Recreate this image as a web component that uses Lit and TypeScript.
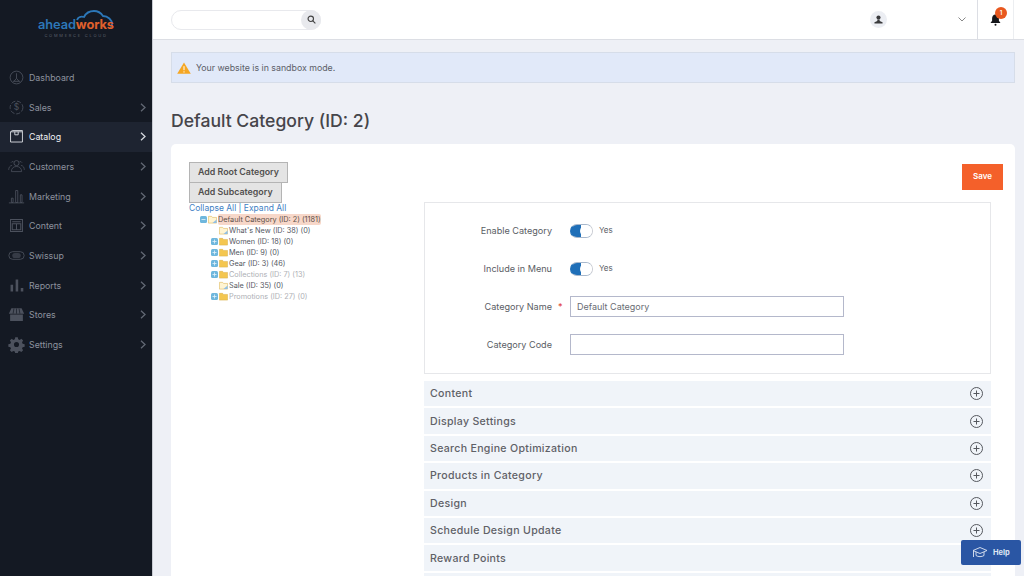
import { LitElement, html, css, svg } from "lit";
import { customElement } from "lit/decorators.js";

const icons: Record<string, unknown> = {
  dashboard: svg`<circle cx="10" cy="10" r="7.5" fill="none" stroke="currentColor"/><path d="M10 5v6M6 14.5h8M10 11l-3 3.5M10 11l3 3.5" fill="none" stroke="currentColor"/>`,
  sales: svg`<circle cx="10" cy="10" r="7.5" fill="none" stroke="currentColor" stroke-dasharray="5 2"/><text x="10" y="13.5" font-size="10" text-anchor="middle" fill="currentColor" font-family="Inter, sans-serif">$</text>`,
  catalog: svg`<path d="M3 4.5h14v12H3zM3 4.5l2-1.5h12v1.5M8 4.5v3.5h4V4.5" fill="none" stroke="currentColor" stroke-width="1.1"/>`,
  customers: svg`<circle cx="10" cy="6" r="3" fill="none" stroke="currentColor"/><path d="M4 16c0-4 2.5-6 6-6s6 2 6 6zM3.5 5.5a2.2 2.2 0 0 1 3-1M16.5 5.5a2.2 2.2 0 0 0-3-1M.8 14c0-3 1.5-5 4-5.3M19.2 14c0-3-1.5-5-4-5.3" fill="none" stroke="currentColor" stroke-width=".9"/>`,
  marketing: svg`<path d="M1 17.5h18M4 17v-5h2v5zM9 17V3h2.5v14zM14.5 17V8h2v9z" fill="none" stroke="currentColor"/>`,
  content: svg`<path d="M3 3h14v14H3zM5 5.5h10M5 8h10v7H5zM10 8v7" fill="none" stroke="currentColor" stroke-width="1.2"/>`,
  swissup: svg`<rect x="1" y="5.5" width="18" height="9" rx="4.5" fill="none" stroke="currentColor"/><rect x="5" y="7" width="10" height="6" rx="3" fill="currentColor" opacity=".6"/>`,
  reports: svg`<path d="M3 9h3v8H3zM9 3h3v14H9zM15 13h3v4h-3z" fill="currentColor"/>`,
  stores: svg`<path d="M4 2.5h12l3 6.5H1zM2.5 10h15v7.5h-15z" fill="currentColor"/><path d="M7 3l-1 6M10 3v6M13 3l1 6" stroke="#141923" stroke-width=".8"/>`,
  settings: svg`<path d="M8.5 1.5h3l.5 2.4 1.7.7 2-1.3 2.1 2.1-1.3 2 .7 1.7 2.4.5v3l-2.4.5-.7 1.7 1.3 2-2.1 2.1-2-1.3-1.7.7-.5 2.4h-3l-.5-2.4-1.7-.7-2 1.3-2.1-2.1 1.3-2-.7-1.7-2.4-.5v-3l2.4-.5.7-1.7-1.3-2 2.1-2.1 2 1.3 1.7-.7zM10 7a3 3 0 1 0 0 6 3 3 0 0 0 0-6z" fill="currentColor" fill-rule="evenodd"/>`,
};

const nav = [
  { id: "dashboard", label: "Dashboard", arrow: false },
  { id: "sales", label: "Sales", arrow: true },
  { id: "catalog", label: "Catalog", arrow: true, active: true },
  { id: "customers", label: "Customers", arrow: true },
  { id: "marketing", label: "Marketing", arrow: true },
  { id: "content", label: "Content", arrow: true },
  { id: "swissup", label: "Swissup", arrow: true },
  { id: "reports", label: "Reports", arrow: true },
  { id: "stores", label: "Stores", arrow: true },
  { id: "settings", label: "Settings", arrow: true },
];

const tree = [
  { label: "What's New (ID: 38) (0)", leaf: true },
  { label: "Women (ID: 18) (0)" },
  { label: "Men (ID: 9) (0)" },
  { label: "Gear (ID: 3) (46)" },
  { label: "Collections (ID: 7) (13)", dim: true },
  { label: "Sale (ID: 35) (0)", leaf: true },
  { label: "Promotions (ID: 27) (0)", dim: true },
];

const sections = [
  "Content",
  "Display Settings",
  "Search Engine Optimization",
  "Products in Category",
  "Design",
  "Schedule Design Update",
  "Reward Points",
];

@customElement("app-root")
export class AppRoot extends LitElement {
  static styles = css`
    :host {
      display: flex;
      width: 1024px;
      height: 576px;
      overflow: hidden;
      position: relative;
      background: #eef0f6;
      font-family: Inter, "Liberation Sans", sans-serif;
      color: #41444c;
    }
    .side {
      width: 152px;
      flex: none;
      background: #141923;
      border-right: 1px solid #c9ccd3;
    }
    .logo {
      height: 62.6px;
      box-sizing: border-box;
      padding-top: 7px;
      display: flex;
      flex-direction: column;
      align-items: center;
      position: relative;
    }
    .cloud {
      position: absolute;
      left: 66px;
      top: 9px;
    }
    .brand {
      margin-top: 11px;
      font-size: 12.8px;
      line-height: 14px;
      font-weight: 600;
      color: #2c77b8;
      position: relative;
      letter-spacing: -0.1px;
    }
    .brand b {
      color: #e0602c;
      font-weight: 700;
    }
    .tag {
      font-size: 4px;
      line-height: 6px;
      letter-spacing: 1.75px;
      color: #5b606b;
      margin-top: 1px;
    }
    .item {
      height: 29.7px;
      display: flex;
      align-items: center;
      color: #8d929e;
      font-size: 8.8px;
    }
    .item.active {
      background: #1e2431;
      color: #f0f1f4;
    }
    .item .ic {
      width: 17px;
      height: 17px;
      margin-left: 8px;
      margin-right: 4px;
      color: #4c515d;
      flex: none;
    }
    .item.active .ic {
      color: #d5d8de;
    }
    .item span {
      flex: 1;
    }
    .chev {
      width: 6px;
      height: 9px;
      margin-right: 6px;
      fill: none;
      stroke: #626874;
      stroke-width: 1.3;
      flex: none;
    }
    .item.active .chev {
      stroke: #d5d8de;
    }
    .main {
      flex: 1;
      min-width: 0;
      display: flex;
      flex-direction: column;
    }
    .top {
      height: 39px;
      flex: none;
      background: #fff;
      border-bottom: 1px solid #dcdee4;
      display: flex;
      align-items: center;
      padding-left: 18px;
    }
    .search {
      width: 150px;
      height: 20px;
      box-sizing: border-box;
      border: 1px solid #e8e9ed;
      border-radius: 10px;
      display: flex;
      justify-content: flex-end;
    }
    .search i {
      width: 20px;
      height: 20px;
      margin: -1px;
      border-radius: 50%;
      background: #e8e9ed;
      display: flex;
      align-items: center;
      justify-content: center;
    }
    .user {
      margin-left: auto;
      width: 17px;
      height: 17px;
      border-radius: 50%;
      background: #eceef3;
      display: flex;
      align-items: center;
      justify-content: center;
    }
    .caret {
      width: 8px;
      height: 5px;
      margin-left: 71px;
      margin-right: 11px;
      fill: none;
      stroke: #888;
    }
    .bell {
      width: 37px;
      height: 39px;
      box-sizing: border-box;
      border-left: 1px solid #dcdee4;
      border-right: 1px solid #eceef1;
      margin-right: 10px;
      position: relative;
      display: flex;
      align-items: center;
      justify-content: center;
    }
    .badge {
      position: absolute;
      left: 17px;
      top: 7px;
      width: 12px;
      height: 12px;
      border-radius: 50%;
      background: #e8581f;
      color: #fff;
      font-size: 6px;
      font-weight: 600;
      line-height: 12px;
      text-align: center;
    }
    .content {
      padding: 12px 9px 0 18px;
      flex: 1;
      min-height: 0;
      display: flex;
      flex-direction: column;
    }
    .msg {
      height: 31px;
      flex: none;
      box-sizing: border-box;
      background: #e1e9f9;
      border: 1px solid #d6dde9;
      display: flex;
      align-items: center;
      gap: 5px;
      padding-left: 5px;
      font-size: 8.8px;
      color: #5c6068;
    }
    h1 {
      margin: 25px 0 10px;
      font-size: 17.6px;
      line-height: 26px;
      font-weight: 500;
      color: #46454a;
      flex: none;
    }
    .card {
      flex: 1;
      min-height: 0;
      background: #fff;
      border-radius: 5px 5px 0 0;
      padding: 18px 12px 0 18px;
      display: flex;
      overflow: hidden;
    }
    .left {
      width: 235px;
      flex: none;
    }
    .btns {
      display: flex;
      flex-direction: column;
      align-items: flex-start;
    }
    .btn {
      height: 21px;
      box-sizing: border-box;
      padding: 0 8px;
      background: #e4e4e4;
      border: 1px solid #b4b4b4;
      color: #52504f;
      font: 600 8.85px/18px Inter, sans-serif;
    }
    .btn + .btn {
      margin-top: -1px;
    }
    .links {
      font-size: 8.5px;
      line-height: 11px;
      color: #3f7fc4;
    }
    .tree {
      padding-left: 11px;
      font-size: 7.3px;
      color: #55585f;
    }
    .node {
      height: 11px;
      display: flex;
      align-items: center;
      gap: 1px;
      white-space: nowrap;
    }
    .node.root .txt {
      background: #f7d7c9;
      color: #5d4f48;
      padding: 1px 0;
      border-radius: 2px;
      line-height: 9px;
    }
    .node.child {
      padding-left: 11px;
    }
    .node.dim {
      color: #aeb0b5;
    }
    .plus {
      width: 7px;
      height: 7px;
      flex: none;
    }
    .folder {
      width: 9px;
      height: 9px;
      flex: none;
    }
    .right {
      flex: 1;
      min-width: 0;
      display: flex;
      flex-direction: column;
    }
    .save {
      align-self: flex-end;
      flex: none;
      width: 41px;
      height: 26px;
      margin-top: 2px;
      background: #f4602a;
      color: #fff;
      font-size: 8px;
      font-weight: 600;
      line-height: 25px;
      text-align: center;
    }
    .form {
      width: 567px;
      height: 172px;
      flex: none;
      box-sizing: border-box;
      margin-top: 12px;
      border: 1px solid #e6e7ea;
      padding-top: 12.5px;
      display: flex;
      flex-direction: column;
      gap: 8px;
    }
    .row {
      height: 30px;
      flex: none;
      display: flex;
      align-items: center;
      font-size: 9.1px;
      color: #5a5d64;
    }
    .row label {
      width: 127px;
      text-align: right;
      flex: none;
    }
    .req {
      width: 18px;
      flex: none;
      color: #e0312a;
      padding-left: 6px;
      box-sizing: border-box;
    }
    .sw {
      width: 23px;
      height: 14px;
      box-sizing: border-box;
      border-radius: 7px;
      background: linear-gradient(90deg, #1f6fb8 50%, #fff 50%);
      border: 1px solid #1f6fb8;
      border-right-color: #c8cbd2;
      border-top-color: #a8b8cc;
      border-bottom-color: #a8b8cc;
      display: flex;
      justify-content: flex-end;
      margin-right: 6px;
    }
    .sw i {
      width: 12px;
      height: 12px;
      border-radius: 50%;
      background: #fff;
    }
    .yes {
      font-size: 8px;
      margin-top: -2px;
    }
    .field {
      width: 274px;
      height: 21px;
      box-sizing: border-box;
      border: 1px solid #b4b8cb;
      padding-left: 6px;
      font-size: 9px;
      line-height: 19px;
      color: #6a6d74;
    }
    .acc {
      width: 567px;
      flex: none;
      margin-top: 7px;
      display: flex;
      flex-direction: column;
      gap: 2px;
    }
    .sec {
      height: 25.4px;
      flex: none;
      background: #f0f4f9;
      display: flex;
      align-items: center;
      justify-content: space-between;
      padding: 0 8px 0 6px;
      font-size: 10.6px;
      font-weight: 500;
      letter-spacing: 0.3px;
      color: #5f6167;
    }
    .sec svg {
      width: 13px;
      height: 13px;
      fill: none;
      stroke: #55585e;
    }
    .help {
      position: absolute;
      left: 961px;
      top: 540px;
      width: 60px;
      height: 25px;
      border-radius: 2px;
      background: #2a56a4;
      color: #dfe6f3;
      font-size: 7.5px;
      font-weight: 700;
      display: flex;
      align-items: center;
      gap: 5px;
      padding-left: 11px;
      box-sizing: border-box;
    }
  `;

  render() {
    return html`
      <aside class="side">
        <div class="logo">
          <svg class="cloud" width="52" height="22" viewBox="0 0 52 22" fill="none">
            <path d="M11 11c1-3 4-4 7-3 2-4 6-6 10-6 4 0 7 2 9 5 5 0 9 4 9 8 0 2-.5 3-1.500 4" stroke="#2c77b8" stroke-width="1.8"/>
          </svg>
          <div class="brand">ahead<b>works</b></div>
          <div class="tag">COMMERCE CLOUD</div>
        </div>
        ${nav.map(
          (n) => html`
            <div class="item ${n.active ? "active" : ""}">
              <svg class="ic" viewBox="0 0 20 20">${icons[n.id]}</svg>
              <span>${n.label}</span>
              ${n.arrow ? html`<svg class="chev" viewBox="0 0 6 9"><path d="M1 .8 5 4.5 1 8.2" /></svg>` : ""}
            </div>
          `
        )}
      </aside>
      <div class="main">
        <header class="top">
          <div class="search">
            <i>
              <svg width="9" height="9" viewBox="0 0 10 10" fill="none" stroke="#444" stroke-width="1.3">
                <circle cx="4.2" cy="4.2" r="3" /><path d="M6.5 6.5 9.3 9.3" />
              </svg>
            </i>
          </div>
          <div class="user">
            <svg width="9" height="9" viewBox="0 0 10 10" fill="#3a3a3c">
              <circle cx="5" cy="2.8" r="2.3" /><path d="M3.7 5h2.6v1.6L9.5 8v1.5H.5V8l3.2-1.4z" />
            </svg>
          </div>
          <svg class="caret" viewBox="0 0 8 5"><path d="M.5.5 4 4 7.5.5" /></svg>
          <div class="bell">
            <svg width="11" height="13" viewBox="0 0 11 13" fill="#15161a">
              <path d="M5.5 1.5c2.3 0 3.4 1.8 3.4 4v2.2L10.5 10H.5l1.6-2.3V5.5c0-2.2 1.1-4 3.4-4z" />
              <circle cx="5.5" cy="11.8" r="1" />
            </svg>
            <div class="badge">1</div>
          </div>
        </header>
        <div class="content">
          <div class="msg">
            <svg width="14" height="12" viewBox="0 0 14 12">
              <path d="M7 .5 13.8 11.8H.2z" fill="#f5a623" />
              <path d="M7 4.2v4M7 9.3v1.2" stroke="#fff" stroke-width="1" />
            </svg>
            Your website is in sandbox mode.
          </div>
          <h1>Default Category (ID: 2)</h1>
          <section class="card">
            <div class="left">
              <div class="btns">
                <div class="btn">Add Root Category</div>
                <div class="btn">Add Subcategory</div>
              </div>
              <div class="links">Collapse All | Expand All</div>
              <div class="tree">
                <div class="node root">${this.plus(true)}${this.folder(true)}<span class="txt">Default Category (ID: 2) (1181)</span></div>
                ${tree.map(
                  (t) => html`
                    <div class="node child ${t.dim ? "dim" : ""}">
                      ${t.leaf ? html`<span class="plus"></span>` : this.plus()}${this.folder(t.leaf)}<span>${t.label}</span>
                    </div>
                  `
                )}
              </div>
            </div>
            <div class="right">
              <div class="save">Save</div>
              <div class="form">
                <div class="row">
                  <label>Enable Category</label><span class="req"></span>
                  <div class="sw"><i></i></div>
                  <span class="yes">Yes</span>
                </div>
                <div class="row">
                  <label>Include in Menu</label><span class="req"></span>
                  <div class="sw"><i></i></div>
                  <span class="yes">Yes</span>
                </div>
                <div class="row">
                  <label>Category Name</label><span class="req">*</span>
                  <div class="field">Default Category</div>
                </div>
                <div class="row">
                  <label>Category Code</label><span class="req"></span>
                  <div class="field"></div>
                </div>
              </div>
              <div class="acc">
                ${sections.map(
                  (s) => html`
                    <div class="sec">
                      ${s}
                      <svg viewBox="0 0 13 13"><circle cx="6.5" cy="6.5" r="6" /><path d="M6.5 3.5v6M3.5 6.5h6" /></svg>
                    </div>
                  `
                )}
                <div class="sec"></div>
              </div>
            </div>
          </section>
        </div>
      </div>
      <div class="help">
        <svg width="16" height="13" viewBox="0 0 16 13" fill="none" stroke="#dfe6f3" stroke-width=".9">
          <path d="M8 1.5 15 4.5 8 7.5 1 4.5zM4 6v3.5c2 1.5 6 1.5 8 0V6M1.5 5v6" />
        </svg>
        Help
      </div>
    `;
  }

  plus(open = false) {
    return html`<svg class="plus" viewBox="0 0 7 7">
      <rect width="7" height="7" rx="1.5" fill="#6fb7dd" />
      <path d="${open ? "M1.5 3.5h4" : "M1.5 3.5h4M3.5 1.5v4"}" stroke="#e6f4fb" stroke-width=".8" />
    </svg>`;
  }

  folder(open = false) {
    return html`<svg class="folder" viewBox="0 0 10 9">
      <path d="M.5 1h3.5l1 1.2h4.500v6.300H.5z" fill="${open ? "#fff4d2" : "#f4c64f"}" stroke="#d9b04a" stroke-width=".6" />
      ${open ? svg`<path d="M5 8.500 9.500 4.500v4z" fill="#8fbfe6" />` : ""}
    </svg>`;
  }
}
